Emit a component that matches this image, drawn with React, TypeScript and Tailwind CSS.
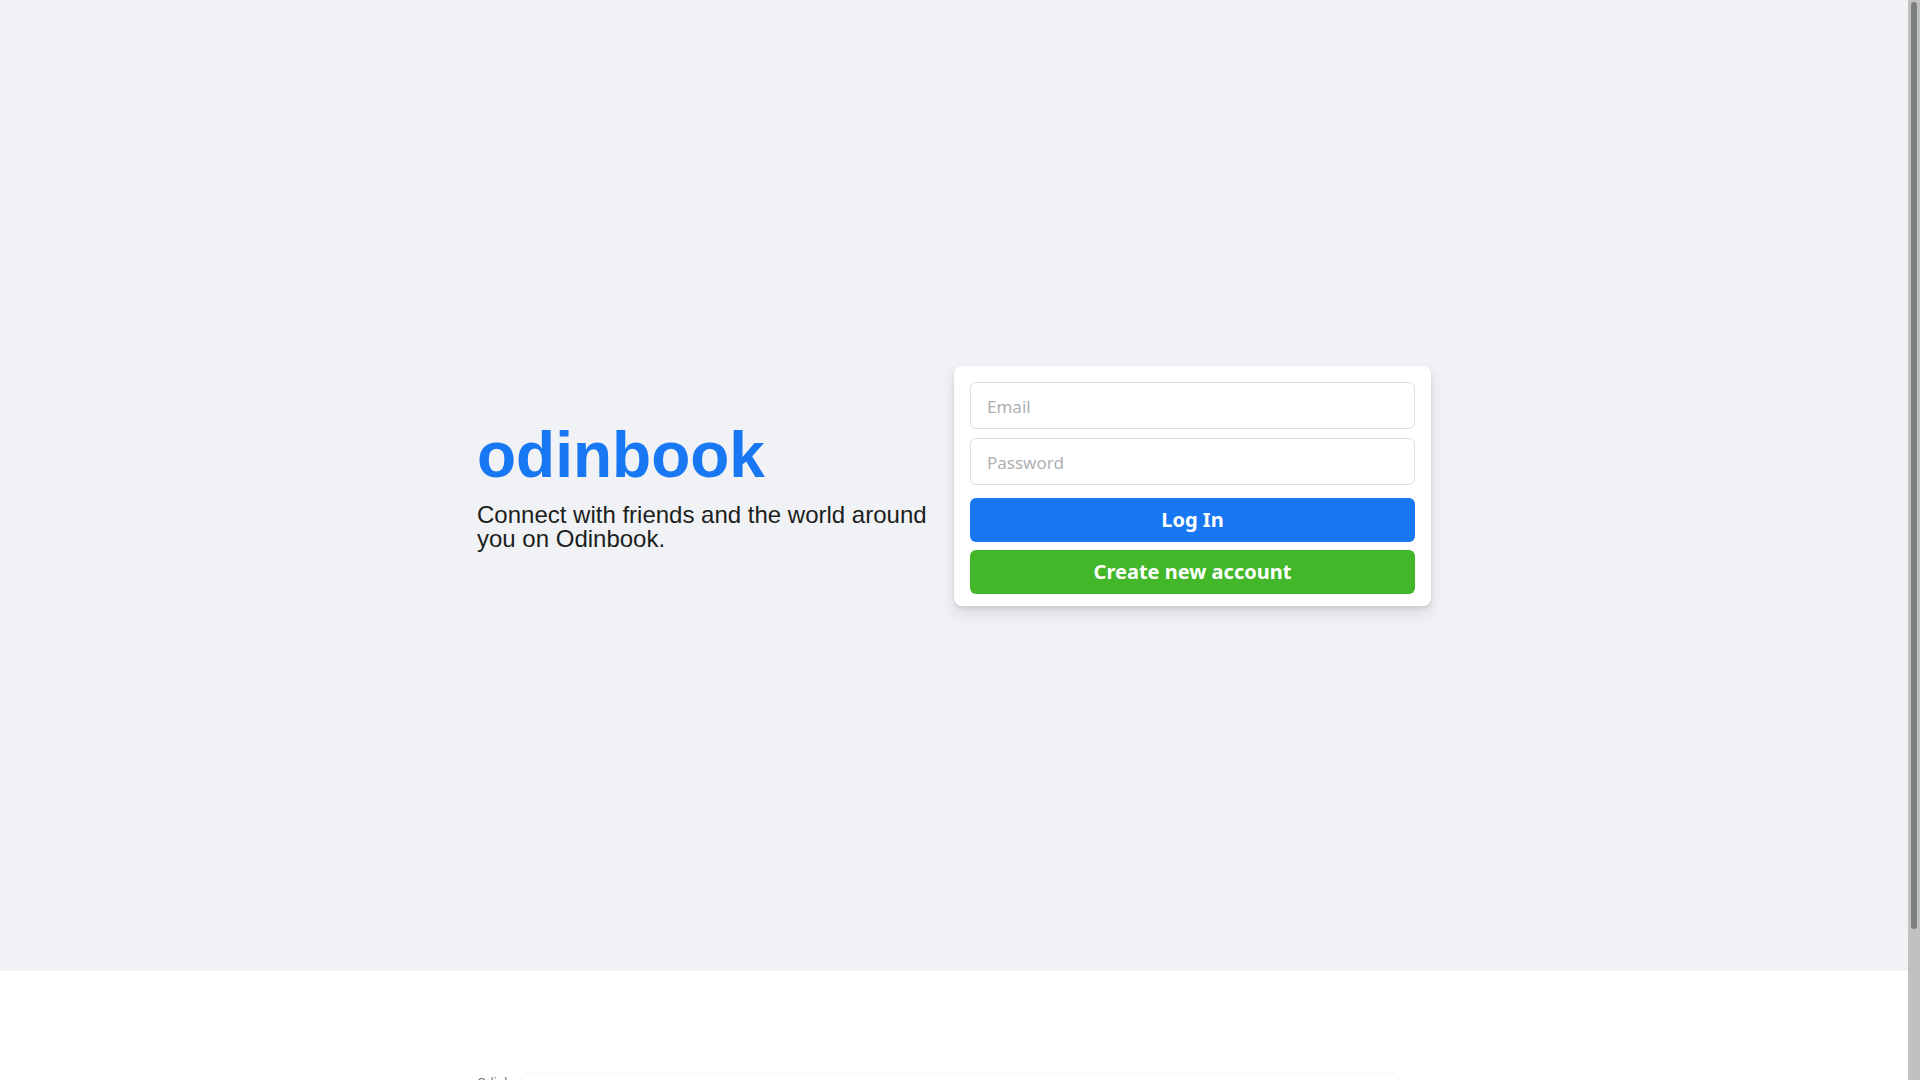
export default function App() {
  return (
    <div className="h-screen flex overflow-hidden bg-white font-['Noto_Sans',sans-serif]">
      <div className="flex-1 min-w-0">
        {/* Hero */}
        <main className="h-[971px] bg-[#f0f2f5] flex items-center justify-center">
          <div className="flex items-center w-[954px]">
            <div className="w-[461px] mr-[16px] font-['Liberation_Sans',Arial,sans-serif]">
              <h1 className="text-[64px] font-bold text-[#1877f2] leading-[1.1]">odinbook</h1>
              <p className="mt-[12px] text-[24px] leading-[24px] text-[#1c1e21]">
                Connect with friends and the world around you on Odinbook.
              </p>
            </div>

            <form
              className="w-[477px] bg-white rounded-lg px-4 pt-4 pb-3 shadow-[0_2px_4px_rgba(0,0,0,0.1),0_8px_16px_rgba(0,0,0,0.1)] flex flex-col"
              onSubmit={(e) => e.preventDefault()}
            >
              <input
                type="email"
                placeholder="Email"
                className="h-[47px] px-4 pt-[2px] border border-[#dddfe2] rounded-md text-[17px] text-[#1c1e21] placeholder:text-[#aeb0b3] outline-none"
              />
              <input
                type="password"
                placeholder="Password"
                className="mt-[9px] h-[47px] px-4 pt-[2px] border border-[#dddfe2] rounded-md text-[17px] text-[#1c1e21] placeholder:text-[#aeb0b3] outline-none"
              />
              <button
                type="submit"
                className="mt-[13px] h-[44px] rounded-md bg-[#1877f2] text-white text-[20px] font-bold"
              >
                Log In
              </button>
              <button
                type="button"
                className="mt-[8px] h-[44px] rounded-md bg-[#42b72a] text-white text-[20px] font-bold"
              >
                Create new account
              </button>
            </form>
          </div>
        </main>

        {/* Footer */}
        <footer className="bg-white pt-[104px] pb-[60px]">
          <div className="w-[954px] mx-auto flex items-start">
            <span className="text-[12px] text-[#737373] leading-[16px]">Odinbook</span>
            <div className="ml-[-12px] w-[878px] h-[120px] bg-white rounded-lg shadow-[0_-1px_4px_rgba(0,0,0,0.05)]" />
          </div>
        </footer>
      </div>

      {/* Scrollbar */}
      <aside className="w-[12px] shrink-0 bg-[#c1c1c1] pt-[2px]" aria-hidden="true">
        <div className="mx-auto w-[6px] h-[927px] rounded-full bg-[#7b7f7e]" />
      </aside>
    </div>
  );
}
